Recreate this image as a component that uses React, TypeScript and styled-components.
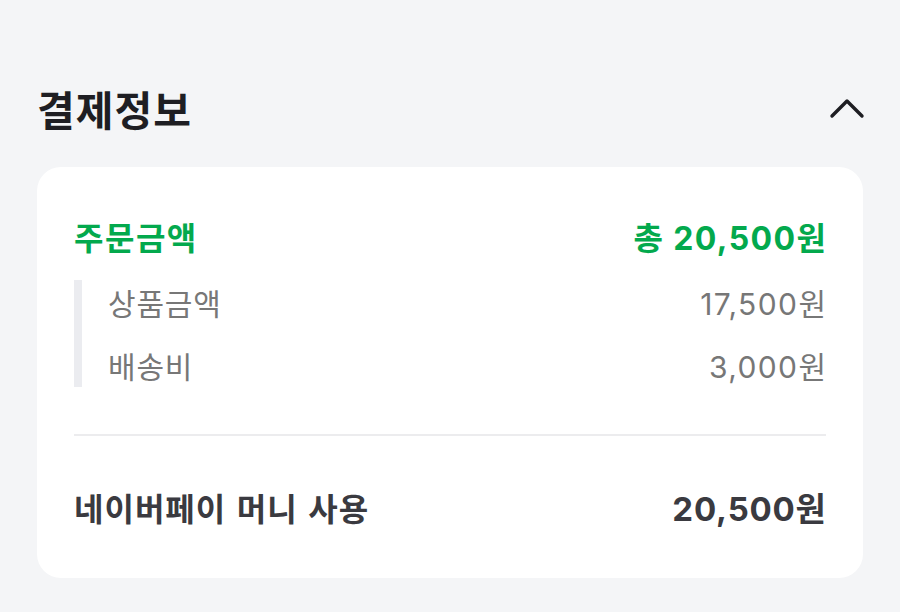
import styled, { createGlobalStyle } from 'styled-components';

const GlobalStyle = createGlobalStyle`
  html, body {
    margin: 0;
    padding: 0;
    background: #f4f5f7;
    font-family: Inter, "Noto Sans CJK KR", "Noto Sans", sans-serif;
  }
`;

const Page = styled.main`
  width: 900px;
  height: 612px;
  box-sizing: border-box;
  padding: 76px 37px 0;
  background: #f4f5f7;
`;

const Header = styled.header`
  display: flex;
  align-items: center;
  justify-content: space-between;
  height: 64px;
  margin-bottom: 27px;
`;

const Title = styled.h1`
  margin: 0;
  font-size: 41px;
  font-weight: 700;
  letter-spacing: 1px;
  color: #1e1e23;
`;

const Toggle = styled.button`
  border: 0;
  background: none;
  padding: 0;
  width: 40px;
  height: 40px;
  display: flex;
  align-items: center;
  justify-content: center;
  color: #1e1e23;
  margin-right: -4px;
`;

const Card = styled.section`
  background: #fff;
  border-radius: 24px;
  padding: 46px 37px 0;
  height: 411px;
  box-sizing: border-box;
`;

const Row = styled.div`
  display: flex;
  align-items: center;
  justify-content: space-between;
`;

const TotalLabel = styled.span`
  font-size: 32px;
  font-weight: 700;
  letter-spacing: 1.5px;
  color: #03a94d;
`;

const TotalValue = styled.span`
  font-size: 32px;
  font-weight: 700;
  letter-spacing: 1.4px;
  margin-right: -1.4px;
  color: #03a94d;
`;

const Details = styled.div`
  margin-top: 21px;
  border-left: 8px solid #ebecf0;
  padding-left: 26px;
  display: flex;
  flex-direction: column;
  gap: 19px;
`;

const DetailRow = styled(Row)`
  height: 44px;
`;

const DetailText = styled.span`
  font-size: 30px;
  font-weight: 400;
  letter-spacing: 0.8px;
  color: #777;
`;

const DetailValue = styled.span`
  font-size: 30px;
  font-weight: 400;
  letter-spacing: 1.4px;
  margin-right: -1.4px;
  color: #777;
`;

const Divider = styled.hr`
  border: 0;
  height: 2px;
  background: #ececee;
  margin: 47px 0 0;
`;

const PayRow = styled(Row)`
  margin-top: 47px;
`;

const PayText = styled.span`
  font-size: 32px;
  font-weight: 700;
  letter-spacing: 1px;
  word-spacing: 2px;
  color: #3a3a40;
`;

const PayValue = styled.span`
  font-size: 33px;
  font-weight: 700;
  letter-spacing: 0.8px;
  margin-right: -0.8px;
  color: #3a3a40;
`;

export default function App() {
  return (
    <>
      <GlobalStyle />
      <Page>
        <Header>
          <Title>결제정보</Title>
          <Toggle aria-label="접기">
            <svg width="36" height="36" viewBox="0 0 36 36" fill="none">
              <path d="M3 26 L18 11 L33 26" stroke="currentColor" strokeWidth="3.4" strokeLinecap="round" strokeLinejoin="round" />
            </svg>
          </Toggle>
        </Header>
        <Card>
          <Row>
            <TotalLabel>주문금액</TotalLabel>
            <TotalValue>총 20,500원</TotalValue>
          </Row>
          <Details>
            <DetailRow>
              <DetailText>상품금액</DetailText>
              <DetailValue>17,500원</DetailValue>
            </DetailRow>
            <DetailRow>
              <DetailText>배송비</DetailText>
              <DetailValue>3,000원</DetailValue>
            </DetailRow>
          </Details>
          <Divider />
          <PayRow>
            <PayText>네이버페이 머니 사용</PayText>
            <PayValue>20,500원</PayValue>
          </PayRow>
        </Card>
      </Page>
    </>
  );
}
